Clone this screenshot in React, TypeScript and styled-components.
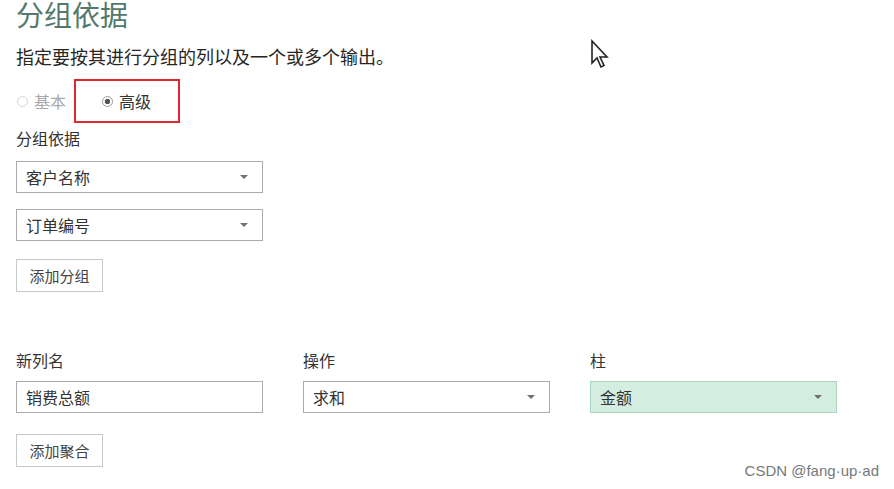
import styled, { createGlobalStyle } from "styled-components";

export default App;

const FONT = `"Noto Sans CJK SC", "Noto Sans", "Liberation Sans", sans-serif`;

function App() {
  return (
    <>
      <GlobalStyle />
      <Page>
        <Title>分组依据</Title>
        <Description>指定要按其进行分组的列以及一个或多个输出。</Description>

        <RadioRow>
          <RadioOption $disabled>
            <RadioDot />
            基本
          </RadioOption>
          <Highlight>
            <RadioOption>
              <RadioDot $checked />
              高级
            </RadioOption>
          </Highlight>
        </RadioRow>

        <SectionLabel>分组依据</SectionLabel>
        <GroupList>
          <Select>
            <span>客户名称</span>
            <Caret />
          </Select>
          <Select>
            <span>订单编号</span>
            <Caret />
          </Select>
        </GroupList>
        <ActionButton $gap={18}>添加分组</ActionButton>

        <AggregateGrid>
          <FieldLabel>新列名</FieldLabel>
          <FieldLabel>操作</FieldLabel>
          <FieldLabel>柱</FieldLabel>
          <TextInput>销费总额</TextInput>
          <Select>
            <span>求和</span>
            <Caret />
          </Select>
          <Select $active>
            <span>金额</span>
            <Caret />
          </Select>
        </AggregateGrid>
        <ActionButton $gap={21}>添加聚合</ActionButton>

        <Pointer width="22" height="30" viewBox="0 0 22 30">
          <path
            d="M2 2 L2 24 L7 19 L11 28 L14 26.5 L10 18 L17 18 Z"
            fill="#fff"
            stroke="#222"
            strokeWidth="1.6"
            strokeLinejoin="miter"
          />
        </Pointer>
        <Watermark>CSDN @fang·up·ad</Watermark>
      </Page>
    </>
  );
}

const GlobalStyle = createGlobalStyle`
  html, body {
    margin: 0;
    padding: 0;
    background: #ffffff;
  }
  body {
    font-family: ${FONT};
  }
`;

const Page = styled.div`
  position: relative;
  width: 894px;
  height: 489px;
  overflow: hidden;
  padding: 0 16px;
  box-sizing: border-box;
  background: #ffffff;
  color: #333333;
`;

const Title = styled.h1`
  margin: -4px 0 0;
  font-size: 28px;
  line-height: 36px;
  font-weight: 400;
  color: #52796a;
`;

const Description = styled.p`
  margin: 12px 0 0;
  font-size: 18px;
  line-height: 24px;
  font-weight: 400;
  color: #262626;
`;

const RadioRow = styled.div`
  display: flex;
  align-items: center;
  margin-top: 11px;
  height: 44px;
`;

const RadioOption = styled.label<{ $disabled?: boolean }>`
  display: flex;
  align-items: center;
  gap: 6px;
  font-size: 16px;
  line-height: 20px;
  color: ${(p) => (p.$disabled ? "#a8a8a8" : "#333333")};
`;

const RadioDot = styled.span<{ $checked?: boolean }>`
  width: 9px;
  height: 9px;
  border-radius: 50%;
  border: 1px solid ${(p) => (p.$checked ? "#9a9a9a" : "#d4d4d4")};
  background: ${(p) =>
    p.$checked ? "radial-gradient(circle, #555 0 2.5px, #fff 3px)" : "#fff"};
  margin-left: 1px;
`;

const Highlight = styled.div`
  display: flex;
  align-items: center;
  box-sizing: border-box;
  width: 106px;
  height: 44px;
  margin-left: 8px;
  padding-left: 25px;
  border: 2px solid #e0262e;
`;

const FieldLabel = styled.div`
  font-size: 16px;
  line-height: 22px;
  color: #333333;
`;

const SectionLabel = styled(FieldLabel)`
  margin-top: 4px;
`;

const GroupList = styled.div`
  display: flex;
  flex-direction: column;
  gap: 16px;
  margin-top: 12px;
`;

const Select = styled.div<{ $active?: boolean }>`
  display: flex;
  align-items: center;
  justify-content: space-between;
  box-sizing: border-box;
  width: 247px;
  height: 32px;
  padding: 0 14px 0 9px;
  font-size: 16px;
  color: #333333;
  background: ${(p) => (p.$active ? "#d3ede1" : "#ffffff")};
  border: 1px solid ${(p) => (p.$active ? "#a9d6c1" : "#ababab")};
`;

const Caret = styled.span`
  width: 0;
  height: 0;
  border-left: 4px solid transparent;
  border-right: 4px solid transparent;
  border-top: 4px solid #707070;
`;

const TextInput = styled.div`
  display: flex;
  align-items: center;
  box-sizing: border-box;
  width: 247px;
  height: 32px;
  padding: 0 9px;
  font-size: 16px;
  color: #333333;
  border: 1px solid #ababab;
`;

const ActionButton = styled.button<{ $gap: number }>`
  display: block;
  box-sizing: border-box;
  width: 87px;
  height: 33px;
  margin-top: ${(p) => p.$gap}px;
  padding: 0;
  font-family: ${FONT};
  font-size: 15px;
  color: #444444;
  background: #ffffff;
  border: 1px solid #c8c8c8;
`;

const AggregateGrid = styled.div`
  display: grid;
  grid-template-columns: 247px 247px 247px;
  column-gap: 40px;
  row-gap: 10px;
  margin-top: 57px;
`;

const Pointer = styled.svg`
  position: absolute;
  left: 590px;
  top: 39px;
`;

const Watermark = styled.div`
  position: absolute;
  right: 15px;
  bottom: 10px;
  font-family: "Liberation Sans", sans-serif;
  font-size: 15px;
  color: #777777;
`;
